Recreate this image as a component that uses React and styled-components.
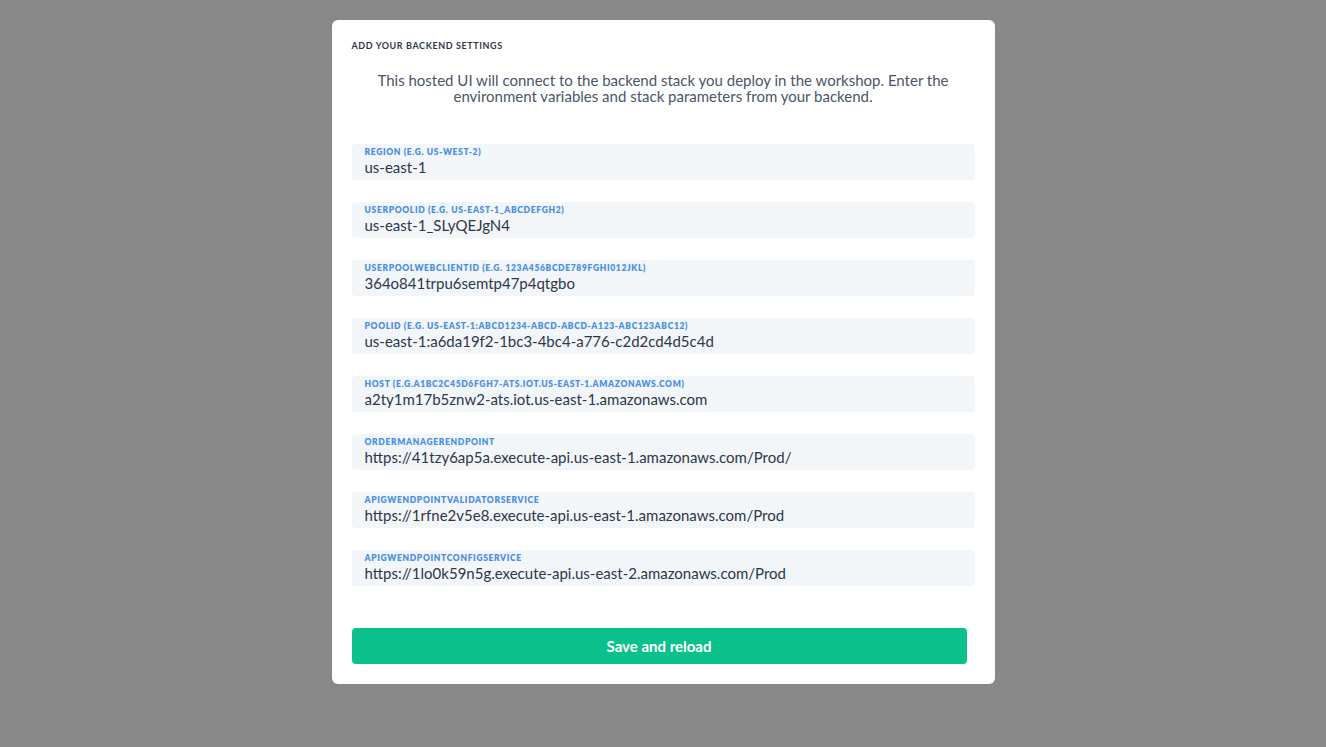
import React from 'react'
import styled, { createGlobalStyle } from 'styled-components'

const GlobalStyle = createGlobalStyle`
  html, body {
    margin: 0;
    padding: 0;
    background: #888888;
    font-family: Lato, "Noto Sans", sans-serif;
  }
  * { box-sizing: border-box; }
`

const Page = styled.div`
  min-height: 747px;
  display: flex;
  justify-content: center;
  align-items: flex-start;
  padding-top: 20px;
`

const Card = styled.div`
  width: 663px;
  background: #ffffff;
  border-radius: 6px;
  padding: 20px;
  display: flex;
  flex-direction: column;
`

const Heading = styled.h6`
  margin: 0;
  font-size: 9px;
  line-height: 12px;
  font-weight: 700;
  letter-spacing: 0.6px;
  text-transform: uppercase;
  color: #2d3748;
`

const Intro = styled.p`
  margin: 20px 0 40px;
  font-size: 15px;
  line-height: 16px;
  text-align: center;
  color: #4a5568;
`

const Fields = styled.div`
  display: flex;
  flex-direction: column;
  gap: 22px;
`

const Field = styled.label`
  display: flex;
  flex-direction: column;
  height: 36px;
  padding: 3px 13px 0;
  background: #f3f6f9;
  border-radius: 4px;
`

const Label = styled.span`
  font-size: 8.5px;
  line-height: 11px;
  font-weight: 800;
  letter-spacing: 0.65px;
  text-transform: uppercase;
  color: #4a8fe2;
`

const Value = styled.input`
  border: none;
  outline: none;
  background: transparent;
  padding: 0;
  margin: 0;
  font-family: inherit;
  font-size: 15px;
  line-height: 19px;
  height: 19px;
  color: #2d3748;
`

const Button = styled.button`
  margin-top: 42px;
  width: 615px;
  height: 36px;
  border: none;
  border-radius: 4px;
  background: #0bc18b;
  color: #ffffff;
  font-family: inherit;
  font-size: 15px;
  font-weight: 700;
  cursor: pointer;
`

const settings = [
  ['Region (e.g. us-west-2)', 'us-east-1'],
  ['UserPoolId (e.g. us-east-1_ABCDEFGH2)', 'us-east-1_SLyQEJgN4'],
  ['UserPoolWebClientId (e.g. 123a456bcde789fghi012jkl)', '364o841trpu6semtp47p4qtgbo'],
  ['PoolId (e.g. us-east-1:abcd1234-abcd-abcd-a123-abc123abc12)', 'us-east-1:a6da19f2-1bc3-4bc4-a776-c2d2cd4d5c4d'],
  ['Host (e.g.a1bc2c45d6fgh7-ats.iot.us-east-1.amazonaws.com)', 'a2ty1m17b5znw2-ats.iot.us-east-1.amazonaws.com'],
  ['OrderManagerEndpoint', 'https://41tzy6ap5a.execute-api.us-east-1.amazonaws.com/Prod/'],
  ['APIGWEndpointValidatorService', 'https://1rfne2v5e8.execute-api.us-east-1.amazonaws.com/Prod'],
  ['APIGWEndpointConfigService', 'https://1lo0k59n5g.execute-api.us-east-2.amazonaws.com/Prod'],
]

function App() {
  return (
    <Page>
      <GlobalStyle />
      <Card>
        <Heading>Add your backend settings</Heading>
        <Intro>
          This hosted UI will connect to the backend stack you deploy in the workshop. Enter the
          <br />
          environment variables and stack parameters from your backend.
        </Intro>
        <Fields>
          {settings.map(([label, value]) => (
            <Field key={label}>
              <Label>{label}</Label>
              <Value defaultValue={value} />
            </Field>
          ))}
        </Fields>
        <Button>Save and reload</Button>
      </Card>
    </Page>
  )
}

export default App
